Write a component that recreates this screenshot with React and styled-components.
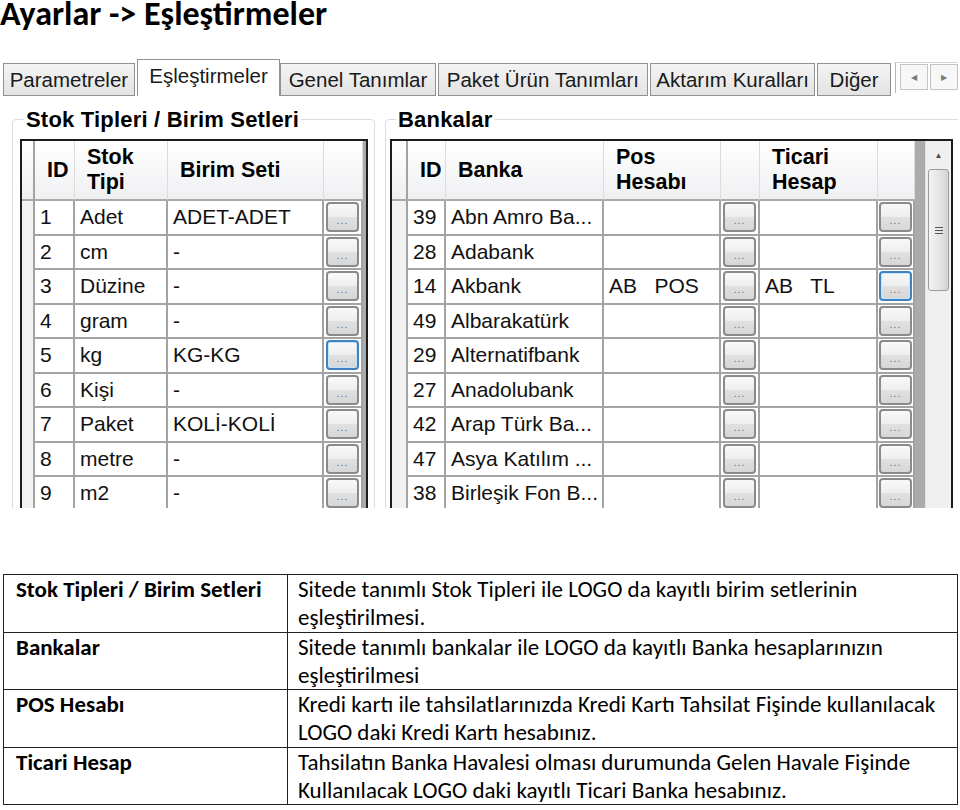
import React from 'react';
import styled, { createGlobalStyle } from 'styled-components';

const GlobalStyle = createGlobalStyle`
  body {
    margin: 0;
    background: #fff;
  }
`;

const Page = styled.div`
  width: 960px;
`;

const Title = styled.h1`
  margin: 0;
  height: 58px;
  box-sizing: border-box;
  font: bold 34px Carlito, Lato, sans-serif;
  line-height: 28px;
  color: #000;
`;

// ---- the app screenshot ----
const Shot = styled.div`
  width: 958px;
  height: 450px;
  overflow: hidden;
  font-family: 'Liberation Sans', Arial, sans-serif;
  color: #000;
`;

const TabStrip = styled.div`
  display: flex;
  align-items: flex-end;
  height: 38px;
  padding-left: 3px;
`;

const Tab = styled.div`
  width: ${(p) => p.$w}px;
  height: ${(p) => (p.$active ? 37 : 33)}px;
  box-sizing: border-box;
  border: 1px solid #8f9196;
  border-bottom: ${(p) => (p.$active ? 'none' : '1px solid #8f9196')};
  background: ${(p) => (p.$active ? '#fff' : 'linear-gradient(#f4f4f4, #e3e3e3)')};
  margin-right: ${(p) => (p.$gap ? 2 : 0)}px;
  display: flex;
  justify-content: center;
  padding-top: 4px;
  font-size: 20.5px;
  line-height: 24px;
  white-space: nowrap;
  color: #1a1a1a;
`;

const ArrowBox = styled.div`
  align-self: flex-start;
  margin: 4px 0 0 2px;
  height: 29px;
  display: flex;
  gap: 2px;
  padding: 1px 0 0 4px;
  border-left: 1px solid #b5b5b5;
  border-top: 1px solid #d5d5d5;
`;

const ArrowBtn = styled.div`
  width: 26px;
  height: 24px;
  border: 1px solid #c4c4c4;
  background: #f7f7f7;
  display: flex;
  align-items: center;
  justify-content: center;
  font-size: 8px;
  color: #7a7a7a;
`;

const Groups = styled.div`
  display: flex;
  gap: 10px;
  padding: 11px 0 0 12px;
`;

const Group = styled.fieldset`
  flex: none;
  width: ${(p) => p.$w}px;
  height: 420px;
  box-sizing: border-box;
  margin: 0;
  padding: 7px 0 0 ${(p) => p.$pad}px;
  border: 1px solid #d6dde4;
  border-radius: 4px;
`;

const Legend = styled.legend`
  margin-left: ${(p) => p.$off}px;
  padding: 0 2px;
  font-size: 22px;
  font-weight: bold;
  line-height: 25px;
  letter-spacing: 0.2px;
`;

const GridFrame = styled.div`
  display: flex;
  width: ${(p) => p.$w}px;
  height: 400px;
  border: 2px solid #1c1c1c;
  background: #ababab;
`;

const GridBody = styled.div`
  flex: 1;
  display: grid;
  grid-template-columns: ${(p) => p.$cols};
  grid-template-rows: 60px;
  grid-auto-rows: 34.5px;
  align-content: start;
`;

const HeadCell = styled.div`
  box-sizing: border-box;
  display: flex;
  align-items: center;
  padding-left: 12px;
  background: linear-gradient(#ffffff, #eff0f2);
  border-right: 1px solid #dcdcdc;
  border-bottom: 2px solid #a9a9a9;
  font-size: 21.5px;
  font-weight: bold;
  line-height: 25px;
`;

const Gutter = styled.div`
  box-sizing: border-box;
  background: ${(p) => (p.$head ? 'linear-gradient(#ffffff, #eff0f2)' : '#f1f1f1')};
  border-right: 2px solid #a3a3a3;
  border-bottom: ${(p) => (p.$head ? '2px solid #a9a9a9' : 'none')};
`;

const Cell = styled.div`
  box-sizing: border-box;
  display: flex;
  align-items: center;
  padding-left: 5px;
  background: #fff;
  border-right: 2px solid #a3a3a3;
  border-bottom: 2px solid #a3a3a3;
  font-size: 21px;
  white-space: pre;
  overflow: hidden;
  color: #111;
`;

const BtnCell = styled(Cell)`
  padding: 0;
  justify-content: center;
`;

const Ellipsis = styled.div`
  width: 33px;
  height: 30px;
  box-sizing: border-box;
  border: 2px solid ${(p) => (p.$focus ? '#3f82c0' : '#8a8a8a')};
  box-shadow: ${(p) => (p.$focus ? 'inset 0 0 0 1px #c6e3f8' : 'none')};
  border-radius: 4px;
  background: linear-gradient(#f9f9f9 0%, #eeeeee 48%, #e0e0e0 52%, #d7d7d7 100%);
  display: flex;
  align-items: flex-end;
  justify-content: center;
  padding-bottom: 4px;
  font-size: 10px;
  line-height: 10px;
  letter-spacing: 1px;
  color: #666;
`;

const Scroll = styled.div`
  width: 26px;
  flex: none;
  box-sizing: border-box;
  background: #f0f0f0;
  border-left: 1px solid #e2e2e2;
  display: flex;
  flex-direction: column;
  align-items: center;
`;

const ScrollArrow = styled.div`
  height: 28px;
  display: flex;
  align-items: center;
  font-size: 8px;
  color: #4a4a4a;
`;

const Thumb = styled.div`
  width: 21px;
  height: 122px;
  box-sizing: border-box;
  border: 1px solid #9c9c9c;
  border-radius: 3px;
  background: linear-gradient(90deg, #f3f3f3, #e6e6e6 50%, #d4d4d4);
  display: flex;
  align-items: center;
  justify-content: center;
`;

// ---- description table ----
const InfoTable = styled.table`
  width: 955px;
  margin: 66px 0 0 3px;
  border-collapse: collapse;
  font-family: Carlito, Lato, sans-serif;
  font-size: 23px;
  color: #000;
`;

const Label = styled.td`
  width: 284px;
  height: 57.5px;
  box-sizing: border-box;
  border: 1.5px solid #222;
  vertical-align: top;
  padding: 0 8px 0 12px;
  line-height: 28px;
  font-weight: bold;
`;

const Desc = styled.td`
  height: 57.5px;
  box-sizing: border-box;
  border: 1.5px solid #222;
  vertical-align: top;
  padding: 0 6px 0 10px;
  line-height: 28px;
  white-space: nowrap;
`;

const stokRows = [
  ['1', 'Adet', 'ADET-ADET'],
  ['2', 'cm', '-'],
  ['3', 'Düzine', '-'],
  ['4', 'gram', '-'],
  ['5', 'kg', 'KG-KG', true],
  ['6', 'Kişi', '-'],
  ['7', 'Paket', 'KOLİ-KOLİ'],
  ['8', 'metre', '-'],
  ['9', 'm2', '-'],
];

const bankRows = [
  ['39', 'Abn Amro Ba...', '', ''],
  ['28', 'Adabank', '', ''],
  ['14', 'Akbank', 'AB   POS', 'AB   TL', true],
  ['49', 'Albarakatürk', '', ''],
  ['29', 'Alternatifbank', '', ''],
  ['27', 'Anadolubank', '', ''],
  ['42', 'Arap Türk Ba...', '', ''],
  ['47', 'Asya Katılım ...', '', ''],
  ['38', 'Birleşik Fon B...', '', ''],
];

const tabs = [
  ['Parametreler', 134],
  ['Eşleştirmeler', 146, true],
  ['Genel Tanımlar', 158],
  ['Paket Ürün Tanımları', 214],
  ['Aktarım Kuralları', 168],
  ['Diğer', 75],
];

const info = [
  ['Stok Tipleri / Birim Setleri', ['Sitede tanımlı Stok Tipleri ile LOGO da kayıtlı birim setlerinin', 'eşleştirilmesi.']],
  ['Bankalar', ['Sitede tanımlı bankalar ile LOGO da kayıtlı Banka hesaplarınızın', 'eşleştirilmesi']],
  ['POS Hesabı', ['Kredi kartı ile tahsilatlarınızda Kredi Kartı Tahsilat Fişinde kullanılacak', 'LOGO daki Kredi Kartı hesabınız.']],
  ['Ticari Hesap', ['Tahsilatın Banka Havalesi olması durumunda Gelen Havale Fişinde', 'Kullanılacak LOGO daki kayıtlı Ticari Banka hesabınız.']],
];

const Dots = ({ focus }) => (
  <BtnCell>
    <Ellipsis $focus={focus}>...</Ellipsis>
  </BtnCell>
);

export default function App() {
  return (
    <Page>
      <GlobalStyle />
      <Title>Ayarlar -&gt; Eşleştirmeler</Title>

      <Shot>
        <TabStrip>
          {tabs.map(([name, w, active]) => (
            <Tab key={name} $w={w} $active={active} $gap={!active}>
              {name}
            </Tab>
          ))}
          <ArrowBox>
            <ArrowBtn>◀</ArrowBtn>
            <ArrowBtn>▶</ArrowBtn>
          </ArrowBox>
        </TabStrip>

        <Groups>
          <Group $w={363} $pad={7}>
            <Legend $off={4}>Stok Tipleri / Birim Setleri</Legend>
            <GridFrame $w={344}>
              <GridBody $cols='13px 40px 93px 156px 39px'>
                <Gutter $head />
                <HeadCell>ID</HeadCell>
                <HeadCell>
                  Stok
                  <br />
                  Tipi
                </HeadCell>
                <HeadCell>Birim Seti</HeadCell>
                <HeadCell />
                {stokRows.map(([id, name, set, focus]) => (
                  <React.Fragment key={id}>
                    <Gutter />
                    <Cell>{id}</Cell>
                    <Cell>{name}</Cell>
                    <Cell>{set}</Cell>
                    <Dots focus={focus} />
                  </React.Fragment>
                ))}
              </GridBody>
            </GridFrame>
          </Group>

          <Group $w={590} $pad={4}>
            <Legend $off={6}>Bankalar</Legend>
            <GridFrame $w={559}>
              <GridBody $cols='16px 38px 158px 117px 39px 118px 37px'>
                <Gutter $head />
                <HeadCell>ID</HeadCell>
                <HeadCell>Banka</HeadCell>
                <HeadCell>
                  Pos
                  <br />
                  Hesabı
                </HeadCell>
                <HeadCell />
                <HeadCell>
                  Ticari
                  <br />
                  Hesap
                </HeadCell>
                <HeadCell />
                {bankRows.map(([id, name, pos, ticari, focus]) => (
                  <React.Fragment key={id}>
                    <Gutter />
                    <Cell>{id}</Cell>
                    <Cell>{name}</Cell>
                    <Cell>{pos}</Cell>
                    <Dots />
                    <Cell>{ticari}</Cell>
                    <Dots focus={focus} />
                  </React.Fragment>
                ))}
              </GridBody>
              <Scroll>
                <ScrollArrow>▲</ScrollArrow>
                <Thumb>
                  <svg width='10' height='9' viewBox='0 0 10 9'>
                    <path d='M1 1.5h8M1 4.5h8M1 7.5h8' stroke='#555' strokeWidth='1.2' />
                  </svg>
                </Thumb>
              </Scroll>
            </GridFrame>
          </Group>
        </Groups>
      </Shot>

      <InfoTable>
        <tbody>
          {info.map(([label, lines]) => (
            <tr key={label}>
              <Label>{label}</Label>
              <Desc>
                {lines[0]}
                <br />
                {lines[1]}
              </Desc>
            </tr>
          ))}
        </tbody>
      </InfoTable>
    </Page>
  );
}
